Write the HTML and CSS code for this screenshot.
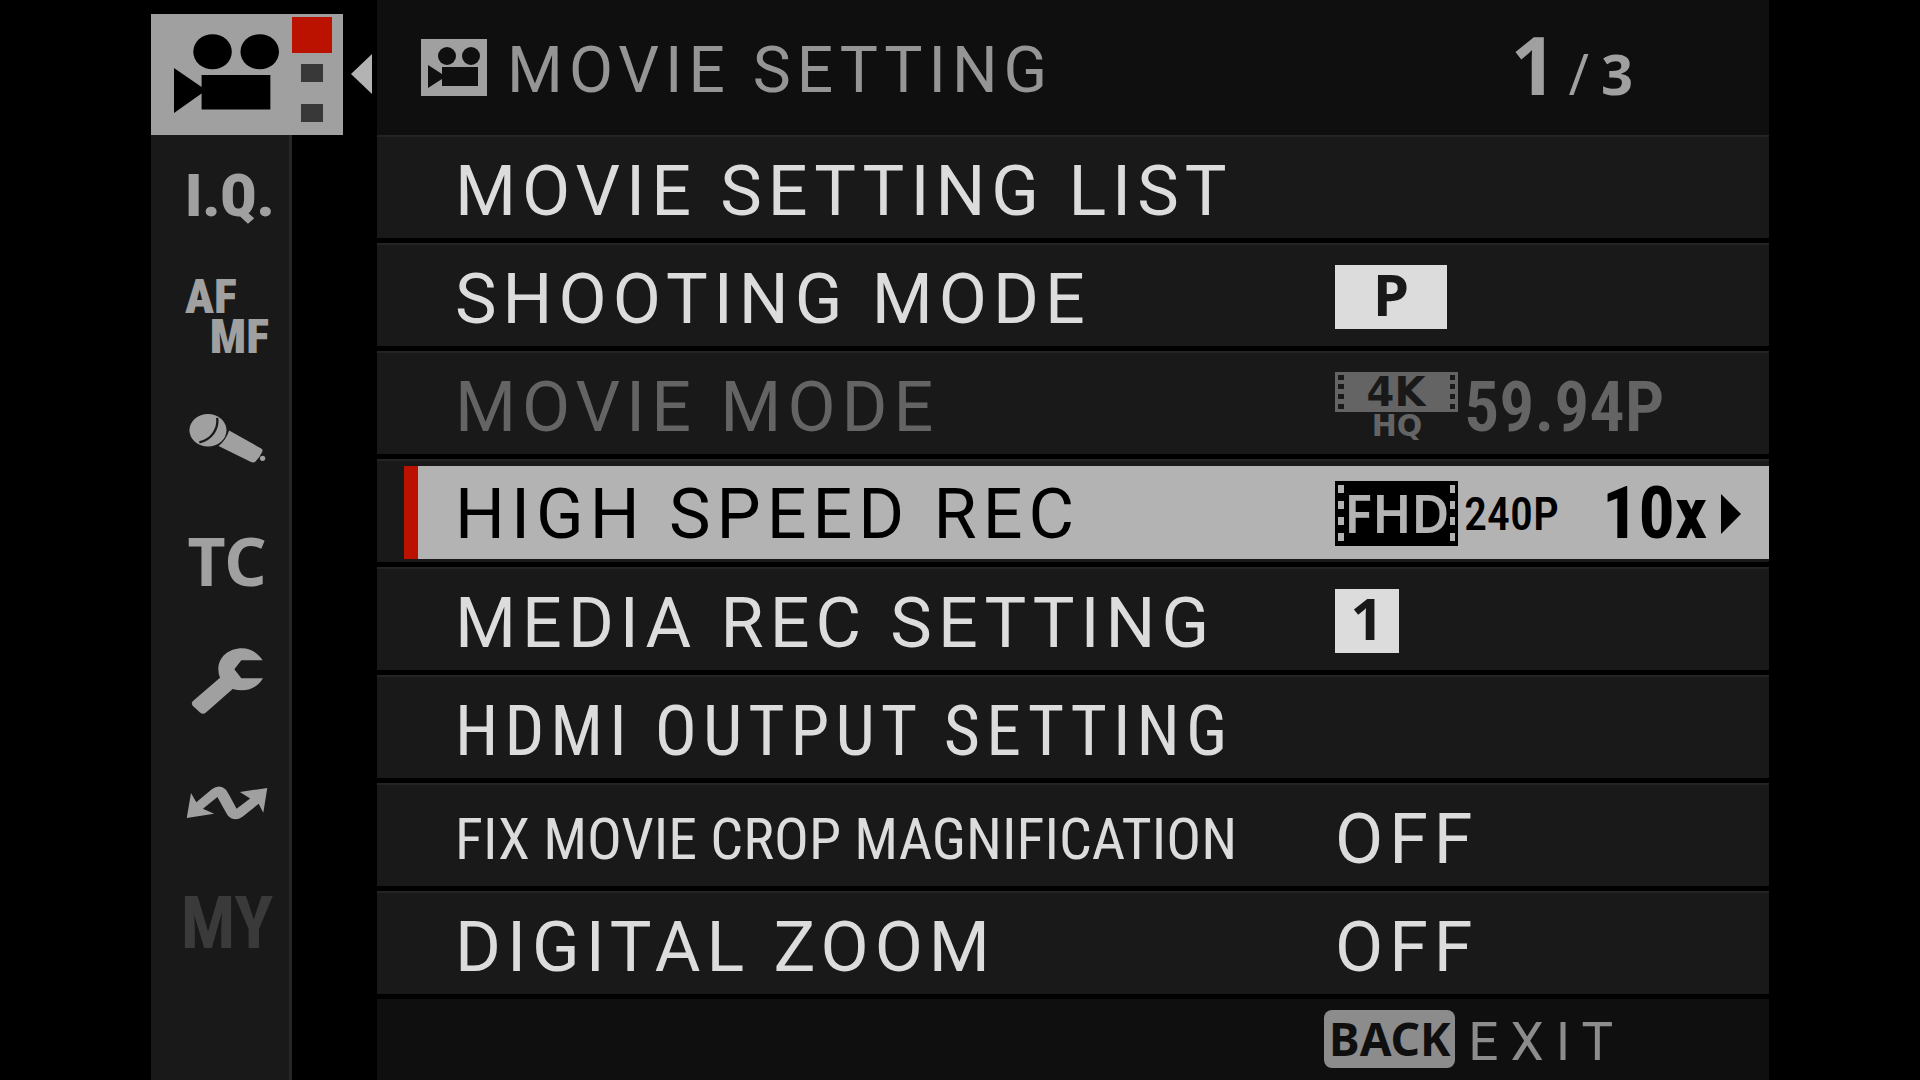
FILE: index.html
```html
<!DOCTYPE html>
<html lang="en">
<head>
<meta charset="utf-8">
<title>Movie Setting</title>
<link rel="stylesheet" href="styles.css">
</head>
<body>
<div class="screen">
  <nav class="sidebar" aria-label="Menu tabs">
    <button class="tab-active" aria-label="Movie setting">
      <svg class="icon-movie" viewBox="101 103 316 237" aria-hidden="true">
        <ellipse cx="217" cy="156" rx="58" ry="53"/><ellipse cx="359" cy="156" rx="58" ry="53"/>
        <path d="M184 226H391V330H184V282L101 340V205L184 262Z"/>
      </svg>
      <span class="pages"><i class="page page-on"></i><i class="page"></i><i class="page"></i></span>
    </button>
    <svg class="pointer" viewBox="0 0 21 40" aria-hidden="true"><path d="M21 0V40L0 20Z"/></svg>
    <div class="tabs">
      <button class="tab iq">I.Q.</button>
      <button class="tab"><span class="afmf"><span>AF</span><span class="mf">MF</span></span></button>
      <button class="tab" aria-label="Audio setting">
        <svg class="icon-mic" viewBox="145 490 232 148" aria-hidden="true">
          <path d="M266 540L364 595Q368 598 366 604Q358 622 345 634Q340 638 332 635L234 587Q256 570 266 540Z"/>
          <ellipse cx="202" cy="539" rx="56" ry="49"/>
          <circle cx="367" cy="624" r="8"/>
          <path class="groove" d="M230 502C234 535 214 566 176 576"/>
        </svg>
      </button>
      <button class="tab tc">TC</button>
      <button class="tab" aria-label="Set up">
        <svg class="icon-wrench" viewBox="152 444 216 198" aria-hidden="true">
          <path d="M367 481C352 458 330 445 305 445C265 445 234 471 234 508Q234 522 239 533L157 604Q152 611 157 617L180 638Q188 644 196 638L277 567Q290 571 305 571C332 571 354 558 368 535H303L282 508L303 481Z"/>
        </svg>
      </button>
      <button class="tab" aria-label="Connection setting">
        <svg class="icon-link" viewBox="138 109 246 103" aria-hidden="true">
          <path d="M139 206L152 130L168 158L215 119Q238 101 258 120Q264 128 290 178L331 147L300 127L383 115L371 190L357 163L308 202Q284 219 264 199Q258 190 232 142L188 178L222 193Z"/>
        </svg>
      </button>
      <button class="tab my" disabled>MY</button>
    </div>
  </nav>

  <main class="panel">
    <header class="head">
      <svg class="icon-head" viewBox="0 0 66 57" aria-hidden="true">
        <rect width="66" height="57"/>
        <g class="cut"><circle cx="26" cy="17" r="9"/><circle cx="50" cy="17" r="9"/><path d="M21 28H57V47H21V40L7 49V26L21 35Z"/></g>
      </svg>
      <h1 class="title">MOVIE SETTING</h1>
      <p class="count"><span class="now">1</span><span class="slash">/</span><span>3</span></p>
    </header>

    <ul class="list">
      <li class="row"><button class="item"><span>MOVIE SETTING LIST</span></button></li>
      <li class="row"><button class="item"><span>SHOOTING MODE</span><span class="value"><b class="box box-wide">P</b></span></button></li>
      <li class="row"><button class="item" disabled><span>MOVIE MODE</span>
        <span class="value">
          <svg class="badge-4k" viewBox="0 0 123 66">
            <path d="M0 0H123V40H0ZM3 3V8H9V3ZM3 12V17H9V12ZM3 22V27H9V22ZM3 32V37H9V32ZM115 3V8H120V3ZM115 12V17H120V12ZM115 22V27H120V22ZM115 32V37H120V32Z" fill-rule="evenodd"/>
            <text class="t4k" x="61" y="34">4K</text><text class="thq" x="62" y="64">HQ</text>
          </svg>
          <span class="rate">59.94P</span>
        </span></button></li>
      <li class="row selected"><button class="item"><span>HIGH SPEED REC</span>
        <span class="value">
          <svg class="badge-fhd" viewBox="0 0 123 65">
            <path d="M0 0H123V65H0ZM3 4V12H9V4ZM3 20V28H9V20ZM3 36V44H9V36ZM3 52V60H9V52ZM115 4V12H120V4ZM115 20V28H120V20ZM115 36V44H120V36ZM115 52V60H120V52Z" fill-rule="evenodd"/>
            <text class="tfhd" x="62" y="52">FHD</text>
          </svg>
          <span class="fps">240P</span><span class="times">10x</span>
          <svg class="next" viewBox="0 0 20 40" aria-hidden="true"><path d="M0 0V40L20 20Z"/></svg>
        </span></button></li>
      <li class="row"><button class="item"><span>MEDIA REC SETTING</span><span class="value"><b class="box">1</b></span></button></li>
      <li class="row"><button class="item"><span class="condensed">HDMI OUTPUT SETTING</span></button></li>
      <li class="row"><button class="item"><span class="condensed small">FIX MOVIE CROP MAGNIFICATION</span><span class="value">OFF</span></button></li>
      <li class="row"><button class="item"><span>DIGITAL ZOOM</span><span class="value">OFF</span></button></li>
    </ul>

    <footer class="foot"><button class="back"><kbd class="key">BACK</kbd><span class="exit">EXIT</span></button></footer>
  </main>
</div>
</body>
</html>
```
FILE: styles.css
```css
* { box-sizing: border-box; margin: 0; padding: 0; }
body { background: #000; color: #dcdcdc; font-family: Roboto, sans-serif; }
button { background: none; border: 0; color: inherit; font: inherit; letter-spacing: inherit; text-align: left; }
svg { display: block; flex: none; fill: currentColor; overflow: visible; }

.screen { display: grid; grid-template-columns: 226px minmax(0, 1fr); min-height: 100vh; padding: 0 151px; }

/* Tab column */
.sidebar { display: grid; grid-template: 135px 1fr / 192px 1fr; color: #a0a0a0; }
.tab-active { display: flex; justify-content: space-between; margin: 14px 0 0; padding: 3px 11px 0 23px; background: #a0a0a0; color: #000; }
.icon-movie { width: 105px; height: 79px; margin-top: 17px; }
.pages { display: flex; flex-direction: column; align-items: center; gap: 22px; }
.page { width: 22px; height: 18px; background: #383838; }
.page-on { width: 40px; height: 36px; margin-bottom: -11px; background: #bb1200; }
.pointer { width: 21px; height: 40px; margin: 54px 0 0 8px; color: #b3b3b3; }
.tabs { display: grid; grid-auto-rows: 1fr; width: 141px; padding-bottom: 95px; background: #191919; border-right: 3px solid #262626; }
.tab { display: grid; place-items: center; padding-left: 14px; font-family: "Roboto Condensed", sans-serif; font-weight: 700; line-height: 1; }
.iq { padding-left: 20px; font-size: 60px; font-weight: 900; }
.afmf { display: grid; width: 84px; font-size: 48px; font-weight: 900; line-height: 40px; }
.mf { text-align: right; }
.tc { font-family: "Noto Sans", sans-serif; font-size: 66px; }
.my { font-size: 72px; color: #3a3a3a; }
.icon-mic { width: 77px; height: 49px; }
.groove { fill: none; stroke: #191919; stroke-width: 7; }
.icon-wrench { width: 72px; height: 66px; }
.icon-link { width: 82px; height: 34px; }

/* Settings panel */
.panel { display: flex; flex-direction: column; background: #0f0f0f; }
.head { display: flex; height: 135px; padding: 0 136px 0 44px; color: #a0a0a0; }
.icon-head { width: 66px; height: 57px; margin-top: 39px; }
.cut { fill: #0f0f0f; }
.title { flex: 1; padding: 33px 0 0 20px; font-size: 64px; font-weight: 400; line-height: 76px; letter-spacing: 6px; color: #959595; }
.count { display: flex; align-items: baseline; gap: 12px; padding-top: 10px; font: 700 56px/108px "Open Sans", sans-serif; }
.now { font-size: 80px; }
.slash { font-weight: 400; }

.list { list-style: none; background: #000; }
.row { height: 103px; margin-bottom: 5px; background: #191919; border-top: 2px solid #242424; }
.item { display: grid; grid-template-columns: minmax(0, 1fr) 434px; align-items: center; width: 100%; height: 100%; padding: 6px 0 0 78px; font-size: 70px; line-height: 80px; letter-spacing: 6px; white-space: nowrap; }
.item:disabled { color: #646464; }
.condensed { font-family: "Roboto Condensed", sans-serif; }
.small { font-size: 58px; letter-spacing: 0; }
.value { display: flex; align-items: center; }
.box { width: 64px; height: 64px; margin-bottom: 4px; background: #dcdcdc; color: #191919; font: 700 58px/58px "Open Sans", sans-serif; letter-spacing: 0; text-align: center; }
.box-wide { width: 112px; }
.badge-4k { width: 123px; height: 66px; margin-bottom: 4px; }
.badge-fhd { width: 123px; height: 65px; }
.t4k, .thq, .tfhd { text-anchor: middle; font-family: "DejaVu Sans", sans-serif; font-weight: 700; letter-spacing: 0; }
.t4k { font-size: 40px; fill: #191919; }
.thq { font-size: 30px; }
.tfhd { font-family: "Noto Sans", sans-serif; font-size: 52px; fill: #b3b3b3; font-weight: 600; }
.rate { padding-left: 6px; font-family: "Roboto Condensed", sans-serif; font-size: 70px; font-weight: 600; letter-spacing: 0; }
.fps { width: 144px; padding-left: 6px; font-family: "Roboto Condensed", sans-serif; font-size: 46px; font-weight: 500; letter-spacing: 0; }
.times { font-family: "Roboto Condensed", sans-serif; font-size: 72px; font-weight: 700; letter-spacing: 0; }
.next { width: 20px; height: 40px; margin-left: 14px; }

.selected { padding: 5px 0 3px 27px; }
.selected .item { padding: 2px 0 0 37px; background: #b3b3b3; border-left: 14px solid #bb1200; color: #000; }

.foot { display: flex; justify-content: flex-end; padding: 11px 144px 0 0; }
.back { display: flex; align-items: flex-start; gap: 13px; color: #8c8c8c; }
.key { width: 131px; height: 58px; background: #8c8c8c; border-radius: 8px; color: #0f0f0f; font: 700 46px/56px "Noto Sans", sans-serif; text-align: center; }
.exit { font-size: 53px; line-height: 64px; letter-spacing: 12px; }
```
